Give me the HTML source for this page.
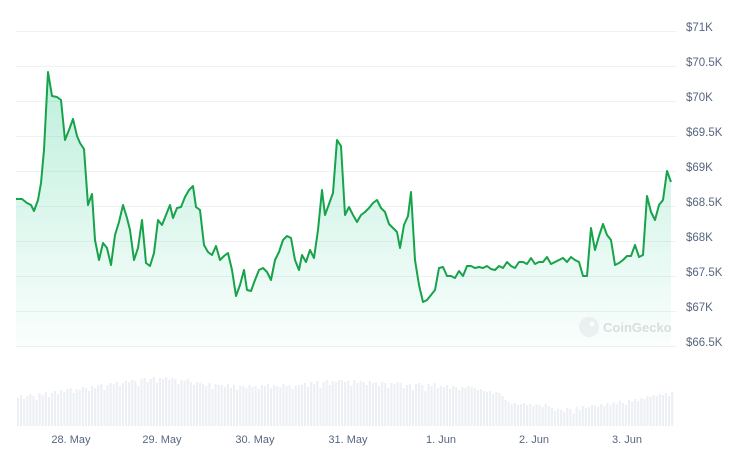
<!DOCTYPE html>
<html><head><style>
html,body{margin:0;padding:0;background:#fff;width:740px;height:457px;overflow:hidden;font-family:"Liberation Sans",sans-serif}
svg{position:absolute;left:0;top:0}
</style></head><body>
<svg width="740" height="457" xmlns="http://www.w3.org/2000/svg">
<defs><linearGradient id="g" x1="0" y1="0" x2="0" y2="1"><stop offset="0" stop-color="#16c784" stop-opacity="0.28"/><stop offset="1" stop-color="#16c784" stop-opacity="0.02"/></linearGradient></defs>
<g stroke="#eff2f5" stroke-width="1">
<line x1="16" x2="676" y1="31.5" y2="31.5"/><line x1="16" x2="676" y1="66.5" y2="66.5"/><line x1="16" x2="676" y1="101.5" y2="101.5"/><line x1="16" x2="676" y1="136.5" y2="136.5"/><line x1="16" x2="676" y1="171.5" y2="171.5"/><line x1="16" x2="676" y1="206.5" y2="206.5"/><line x1="16" x2="676" y1="241.5" y2="241.5"/><line x1="16" x2="676" y1="276.5" y2="276.5"/><line x1="16" x2="676" y1="311.5" y2="311.5"/><line x1="16" x2="676" y1="346.5" y2="346.5"/>
</g>
<g fill="#58667e" font-size="11.5">
<text x="686" y="31">$71K</text><text x="686" y="66">$70.5K</text><text x="686" y="101">$70K</text><text x="686" y="136">$69.5K</text><text x="686" y="171">$69K</text><text x="686" y="206">$68.5K</text><text x="686" y="241">$68K</text><text x="686" y="276">$67.5K</text><text x="686" y="311">$67K</text><text x="686" y="346">$66.5K</text>
</g>
<g fill="#58667e" font-size="11" text-anchor="middle">
<text x="71" y="443">28. May</text><text x="162" y="443">29. May</text><text x="255" y="443">30. May</text><text x="348" y="443">31. May</text><text x="441" y="443">1. Jun</text><text x="534" y="443">2. Jun</text><text x="627" y="443">3. Jun</text>
</g>
<path fill="url(#g)" d="M16,199 L22,199 L27,203 L31,205 L34,211 L38,200 L41,183 L44,150 L48,72 L52,96 L57,97 L61,100 L65,140 L69,130 L73,119 L77,136 L80,143 L84,149 L88,205 L92,194 L95,240 L99,260 L103,243 L107,248 L111,265 L115,235 L119,222 L123,205 L127,218 L130,230 L134,260 L138,248 L142,220 L146,263 L150,266 L154,253 L158,220 L162,225 L166,215 L170,205 L173,218 L177,208 L181,207 L185,197 L189,190 L193,186 L196,207 L200,210 L204,245 L208,252 L212,255 L216,246 L220,260 L224,256 L228,253 L232,270 L236,296 L240,285 L244,270 L247,290 L251,291 L255,280 L259,270 L263,268 L267,272 L271,280 L275,260 L279,252 L283,240 L287,236 L291,238 L295,260 L299,270 L302,255 L306,262 L310,250 L314,258 L318,230 L322,190 L325,215 L329,204 L333,193 L337,140 L341,146 L345,215 L349,207 L353,215 L357,222 L361,215 L365,212 L369,208 L373,203 L377,200 L381,208 L385,212 L389,224 L393,228 L397,232 L400,248 L404,225 L408,216 L411,192 L415,260 L419,285 L423,302 L427,300 L431,295 L435,290 L439,268 L443,267 L447,276 L451,276 L455,278 L459,271 L463,276 L467,266 L471,266 L475,268 L479,267 L483,268 L487,266 L491,269 L495,270 L499,266 L503,268 L507,262 L511,266 L515,268 L519,262 L523,262 L527,264 L531,258 L535,264 L539,262 L543,262 L547,257 L551,264 L555,262 L559,260 L563,258 L567,262 L571,257 L575,260 L579,262 L583,276 L587,276 L591,228 L595,250 L599,236 L603,224 L607,235 L611,240 L615,265 L619,263 L623,260 L627,256 L631,256 L635,245 L639,257 L643,255 L647,196 L651,212 L655,220 L659,205 L663,200 L667,171 L671,182 L671,347 L16,347 Z"/>
<path fill="none" stroke="#16a34a" stroke-width="2" stroke-linejoin="round" d="M16,199 L22,199 L27,203 L31,205 L34,211 L38,200 L41,183 L44,150 L48,72 L52,96 L57,97 L61,100 L65,140 L69,130 L73,119 L77,136 L80,143 L84,149 L88,205 L92,194 L95,240 L99,260 L103,243 L107,248 L111,265 L115,235 L119,222 L123,205 L127,218 L130,230 L134,260 L138,248 L142,220 L146,263 L150,266 L154,253 L158,220 L162,225 L166,215 L170,205 L173,218 L177,208 L181,207 L185,197 L189,190 L193,186 L196,207 L200,210 L204,245 L208,252 L212,255 L216,246 L220,260 L224,256 L228,253 L232,270 L236,296 L240,285 L244,270 L247,290 L251,291 L255,280 L259,270 L263,268 L267,272 L271,280 L275,260 L279,252 L283,240 L287,236 L291,238 L295,260 L299,270 L302,255 L306,262 L310,250 L314,258 L318,230 L322,190 L325,215 L329,204 L333,193 L337,140 L341,146 L345,215 L349,207 L353,215 L357,222 L361,215 L365,212 L369,208 L373,203 L377,200 L381,208 L385,212 L389,224 L393,228 L397,232 L400,248 L404,225 L408,216 L411,192 L415,260 L419,285 L423,302 L427,300 L431,295 L435,290 L439,268 L443,267 L447,276 L451,276 L455,278 L459,271 L463,276 L467,266 L471,266 L475,268 L479,267 L483,268 L487,266 L491,269 L495,270 L499,266 L503,268 L507,262 L511,266 L515,268 L519,262 L523,262 L527,264 L531,258 L535,264 L539,262 L543,262 L547,257 L551,264 L555,262 L559,260 L563,258 L567,262 L571,257 L575,260 L579,262 L583,276 L587,276 L591,228 L595,250 L599,236 L603,224 L607,235 L611,240 L615,265 L619,263 L623,260 L627,256 L631,256 L635,245 L639,257 L643,255 L647,196 L651,212 L655,220 L659,205 L663,200 L667,171 L671,182"/>
<path fill="#eceff3" transform="translate(17,0) scale(1.046,1) translate(-17,0)" d="M17,426
v-28h2v28m0.95,0v-31h2v31m0.95,0v-27h2v27m0.95,0v-30h2v30m0.95,0v-32h2v32m0.95,0v-30h2v30m0.95,0v-26h2v26m0.95,0v-33h2v33m0.95,0v-31h2v31m0.95,0v-34h2v34m0.95,0v-29h2v29m0.95,0v-33h2v33m0.95,0v-35h2v35m0.95,0v-32h2v32m0.95,0
v-36h2v36m0.95,0v-34h2v34m0.95,0v-37h2v37m0.95,0v-38h2v38m0.95,0v-33h2v33m0.95,0v-37h2v37m0.95,0v-36h2v36m0.95,0v-39h2v39m0.95,0v-38h2v38m0.95,0v-35h2v35m0.95,0
v-40h2v40m0.95,0v-38h2v38m0.95,0v-41h2v41m0.95,0v-42h2v42m0.95,0v-36h2v36m0.95,0v-41h2v41m0.95,0v-43h2v43m0.95,0v-42h2v42m0.95,0v-44h2v44m0.95,0v-40h2v40m0.95,0v-43h2v43m0.95,0v-45h2v45m0.95,0v-44h2v44m0.95,0
v-46h2v46m0.95,0v-45h2v45m0.95,0v-40h2v40m0.95,0v-47h2v47m0.95,0v-48h2v48m0.95,0v-44h2v44m0.95,0v-47h2v47m0.95,0v-49h2v49m0.95,0v-43h2v43m0.95,0v-48h2v48m0.95,0v-47h2v47m0.95,0v-49h2v49m0.95,0v-46h2v46m0.95,0
v-48h2v48m0.95,0v-47h2v47m0.95,0v-42h2v42m0.95,0v-46h2v46m0.95,0v-45h2v45m0.95,0v-47h2v47m0.95,0v-44h2v44m0.95,0v-41h2v41m0.95,0v-44h2v44m0.95,0v-43h2v43m0.95,0
v-42h2v42m0.95,0v-40h2v40m0.95,0v-43h2v43m0.95,0v-37h2v37m0.95,0v-42h2v42m0.95,0v-41h2v41m0.95,0v-41h2v41m0.95,0v-39h2v39m0.95,0v-42h2v42m0.95,0v-38h2v38m0.95,0v-41h2v41m0.95,0v-36h2v36m0.95,0v-40h2v40m0.95,0
v-40h2v40m0.95,0v-38h2v38m0.95,0v-41h2v41m0.95,0v-39h2v39m0.95,0v-40h2v40m0.95,0v-37h2v37m0.95,0v-41h2v41m0.95,0v-40h2v40m0.95,0v-42h2v42m0.95,0v-38h2v38m0.95,0v-41h2v41m0.95,0v-40h2v40m0.95,0v-39h2v39m0.95,0v-42h2v42m0.95,0v-40h2v40m0.95,0v-41h2v41m0.95,0v-37h2v37m0.95,0v-40h2v40m0.95,0v-41h2v41m0.95,0
v-41h2v41m0.95,0v-43h2v43m0.95,0v-39h2v39m0.95,0v-44h2v44m0.95,0v-42h2v42m0.95,0v-45h2v45m0.95,0v-38h2v38m0.95,0v-44h2v44m0.95,0v-46h2v46m0.95,0v-41h2v41m0.95,0v-45h2v45m0.95,0v-44h2v44m0.95,0v-46h2v46m0.95,0
v-46h2v46m0.95,0v-44h2v44m0.95,0v-45h2v45m0.95,0v-40h2v40m0.95,0v-46h2v46m0.95,0v-43h2v43m0.95,0v-45h2v45m0.95,0v-44h2v44m0.95,0v-41h2v41m0.95,0v-45h2v45m0.95,0v-43h2v43m0.95,0v-44h2v44m0.95,0v-40h2v40m0.95,0v-44h2v44m0.95,0v-43h2v43m0.95,0v-38h2v38m0.95,0v-43h2v43m0.95,0v-42h2v42m0.95,0v-44h2v44m0.95,0
v-43h2v43m0.95,0v-38h2v38m0.95,0v-41h2v41m0.95,0v-42h2v42m0.95,0v-36h2v36m0.95,0v-42h2v42m0.95,0v-43h2v43m0.95,0v-41h2v41m0.95,0v-35h2v35m0.95,0v-42h2v42m0.95,0v-40h2v40m0.95,0v-43h2v43m0.95,0v-38h2v38m0.95,0v-40h2v40m0.95,0v-39h2v39m0.95,0v-41h2v41m0.95,0v-37h2v37m0.95,0v-40h2v40m0.95,0v-39h2v39m0.95,0v-36h2v36m0.95,0v-39h2v39m0.95,0v-38h2v38m0.95,0v-40h2v40m0.95,0
v-39h2v39m0.95,0v-38h2v38m0.95,0v-36h2v36m0.95,0v-37h2v37m0.95,0v-35h2v35m0.95,0v-34h2v34m0.95,0v-35h2v35m0.95,0v-32h2v32m0.95,0v-34h2v34m0.95,0v-33h2v33m0.95,0
v-30h2v30m0.95,0v-26h2v26m0.95,0v-24h2v24m0.95,0v-22h2v22m0.95,0v-23h2v23m0.95,0v-21h2v21m0.95,0
v-22h2v22m0.95,0v-23h2v23m0.95,0v-21h2v21m0.95,0v-22h2v22m0.95,0v-20h2v20m0.95,0v-22h2v22m0.95,0v-21h2v21m0.95,0v-19h2v19m0.95,0v-22h2v22m0.95,0v-20h2v20m0.95,0v-18h2v18m0.95,0v-15h2v15m0.95,0v-17h2v17m0.95,0
v-16h2v16m0.95,0v-14h2v14m0.95,0v-18h2v18m0.95,0v-17h2v17m0.95,0v-12h2v12m0.95,0v-19h2v19m0.95,0v-16h2v16m0.95,0v-20h2v20m0.95,0v-18h2v18m0.95,0v-19h2v19m0.95,0v-21h2v21m0.95,0v-20h2v20m0.95,0v-19h2v19m0.95,0
v-22h2v22m0.95,0v-20h2v20m0.95,0v-23h2v23m0.95,0v-21h2v21m0.95,0v-24h2v24m0.95,0v-22h2v22m0.95,0v-25h2v25m0.95,0v-23h2v23m0.95,0v-21h2v21m0.95,0v-26h2v26m0.95,0v-24h2v24m0.95,0v-27h2v27m0.95,0v-25h2v25m0.95,0
v-28h2v28m0.95,0v-27h2v27m0.95,0v-30h2v30m0.95,0v-29h2v29m0.95,0v-31h2v31m0.95,0v-30h2v30m0.95,0v-32h2v32m0.95,0v-31h2v31m0.95,0v-33h2v33m0.95,0v-30h2v30m0.95,0v-34h2v34"/>
<g opacity="0.35"><circle cx="589" cy="327" r="10" fill="#d5d9de"/><circle cx="592" cy="324" r="2.5" fill="#fff"/>
<text x="603" y="332" font-size="13" fill="#a0a6ae" font-weight="bold">CoinGecko</text></g>
</svg>
</body></html>
